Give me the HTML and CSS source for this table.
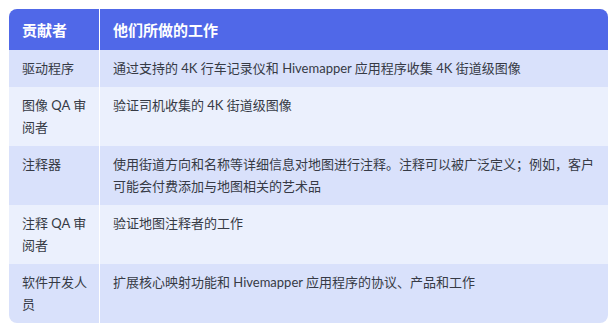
FILE: index.html
```html
<!DOCTYPE html>
<html lang="zh">
<head>
<meta charset="utf-8">
<link rel="stylesheet" href="styles.css">
</head>
<body>
<table class="roles">
  <thead>
    <tr><th class="c1">贡献者</th><th class="c2">他们所做的工作</th></tr>
  </thead>
  <tbody>
    <tr class="dark"><td class="c1">驱动程序</td><td class="c2">通过支持的 4K 行车记录仪和 Hivemapper 应用程序收集 4K 街道级图像</td></tr>
    <tr class="light"><td class="c1">图像 QA 审阅者</td><td class="c2">验证司机收集的 4K 街道级图像</td></tr>
    <tr class="dark"><td class="c1">注释器</td><td class="c2">使用街道方向和名称等详细信息对地图进行注释。注释可以被广泛定义；例如，客户可能会付费添加与地图相关的艺术品</td></tr>
    <tr class="light"><td class="c1">注释 QA 审阅者</td><td class="c2">验证地图注释者的工作</td></tr>
    <tr class="dark"><td class="c1">软件开发人员</td><td class="c2">扩展核心映射功能和 Hivemapper 应用程序的协议、产品和工作</td></tr>
  </tbody>
</table>
</body>
</html>
```
FILE: styles.css
```css
html, body { background: #ffffff; }
body {
  margin: 9px 5px 9px 9px;
  font-family: Lato, "Noto Sans CJK SC", sans-serif;
  color: #363a45;
}
.roles {
  width: 599px;
  border-collapse: separate;
  border-spacing: 0;
  border-radius: 8px;
  overflow: hidden;
  table-layout: fixed;
}
.roles th {
  background: #5068e8;
  color: #ffffff;
  font-weight: 700;
  font-size: 15px;
  line-height: 22px;
  text-align: left;
  padding: 10px 11px 9px 13px;
}
.roles td {
  font-size: 13px;
  line-height: 22px;
  padding: 7px 11px 8px 13px;
  vertical-align: top;
}
.roles .c1 {
  width: 66px;
  border-right: 1px solid #ffffff;
}
.dark td { background: #d9e1fb; }
.light td { background: #ebf0fd; }
```
